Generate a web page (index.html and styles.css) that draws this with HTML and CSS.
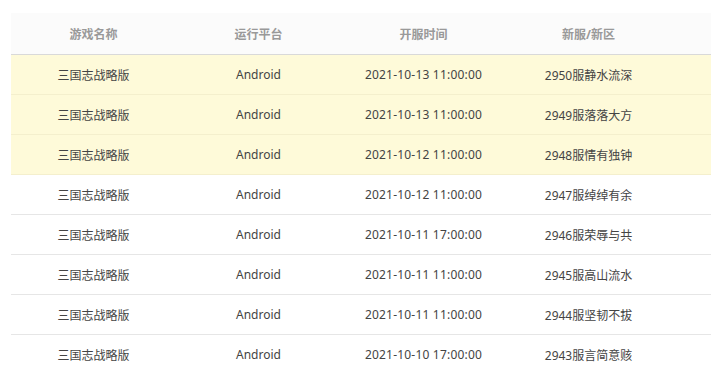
FILE: index.html
```html
<!DOCTYPE html>
<html lang="zh-CN">
<head>
<meta charset="utf-8">
<link rel="stylesheet" href="styles.css">
</head>
<body>
<div class="wrap">
  <table class="list">
    <colgroup><col class="c"><col class="c"><col class="c"><col class="c"><col></colgroup>
    <thead>
      <tr><th>游戏名称</th><th>运行平台</th><th>开服时间</th><th>新服/新区</th><th></th></tr>
    </thead>
    <tbody>
      <tr class="hot"><td>三国志战略版</td><td>Android</td><td class="time">2021-10-13 11:00:00</td><td>2950服静水流深</td><td></td></tr>
      <tr class="hot"><td>三国志战略版</td><td>Android</td><td class="time">2021-10-13 11:00:00</td><td>2949服落落大方</td><td></td></tr>
      <tr class="hot"><td>三国志战略版</td><td>Android</td><td class="time">2021-10-12 11:00:00</td><td>2948服情有独钟</td><td></td></tr>
      <tr><td>三国志战略版</td><td>Android</td><td class="time">2021-10-12 11:00:00</td><td>2947服绰绰有余</td><td></td></tr>
      <tr><td>三国志战略版</td><td>Android</td><td class="time">2021-10-11 17:00:00</td><td>2946服荣辱与共</td><td></td></tr>
      <tr><td>三国志战略版</td><td>Android</td><td class="time">2021-10-11 11:00:00</td><td>2945服高山流水</td><td></td></tr>
      <tr><td>三国志战略版</td><td>Android</td><td class="time">2021-10-11 11:00:00</td><td>2944服坚韧不拔</td><td></td></tr>
      <tr><td>三国志战略版</td><td>Android</td><td class="time">2021-10-10 17:00:00</td><td>2943服言简意赅</td><td></td></tr>
    </tbody>
  </table>
</div>
</body>
</html>
```
FILE: styles.css
```css
html, body {
  margin: 0;
  padding: 0;
  background: #fff;
}
.wrap {
  padding: 13px 0 0 11px;
  overflow: hidden;
}
.list {
  width: 700px;
  border-collapse: collapse;
  table-layout: fixed;
  font-family: "Noto Sans", "Noto Sans CJK SC", sans-serif;
  font-size: 12px;
}
.list col.c {
  width: 165px;
}
.list th {
  height: 41px;
  padding: 0;
  background: #fbfbfb;
  color: #999;
  font-weight: bold;
  text-align: center;
  border-bottom: 1px solid #d9d9d9;
}
.list td {
  height: 39px;
  padding: 0;
  color: #444;
  text-align: center;
  border-bottom: 1px solid #e6e6e6;
}
.list td.time {
  letter-spacing: 0.2px;
}
.list tr.hot td {
  background: #fefad9;
  border-bottom-color: #f4efcd;
}
```
